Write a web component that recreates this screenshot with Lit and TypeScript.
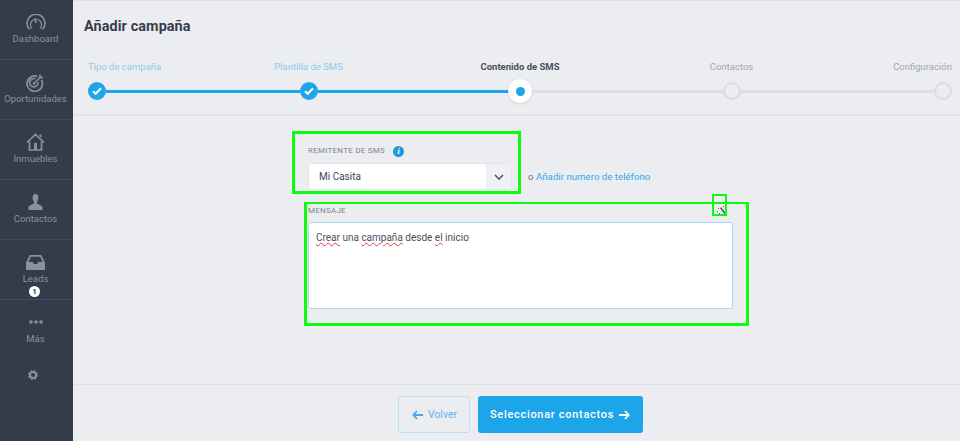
import { LitElement, html, css, svg } from "lit";
import { customElement } from "lit/decorators.js";

const check = html`<svg width="12" height="10" viewBox="0 0 12 10"><path d="M2 5.200 4.700 7.800 10 2.300" fill="none" stroke="#fff" stroke-width="2"/></svg>`;

const icons: Record<string, unknown> = {
  gauge: svg`<svg width="20" height="17" viewBox="0 0 20 17" fill="none" stroke="#8b919c"><path stroke-width="1.6" d="M3.5 15.5A9 9 0 1 1 16.5 15.5"/><path stroke-width="1.2" d="M6 14.5a5.5 5.5 0 1 1 8 0"/><path stroke-width="1.6" d="M10 9 8.8 4.5"/><path stroke-width="1" stroke-dasharray="1 1.5" d="M4.5 9a6 6 0 0 1 11 0"/></svg>`,
  target: svg`<svg width="19" height="19" viewBox="0 0 19 19" fill="none" stroke="#8b919c"><path stroke-width="1.7" d="M15.5 7a7.7 7.7 0 1 1-4-3.5"/><path stroke-width="1.6" d="M12 9a4.2 4.2 0 1 1-2.5-3.2"/><circle cx="8" cy="10.5" r="1.3" fill="#8b919c" stroke="none"/><path stroke-width="1.5" d="M8 10.5 15 3.5"/><path stroke-width="1.5" d="M14 1.5v3h3"/></svg>`,
  home: svg`<svg width="19" height="18" viewBox="0 0 19 18" fill="none" stroke="#8b919c"><path stroke-width="1.7" d="M1 9.5 9.5 1.5 18 9.5"/><path stroke-width="1.7" d="M3.5 8.5V17h12V8.5"/><path fill="#8b919c" stroke="none" d="M13.5 1.5h2v3.5l-2-2zM8 11a1.5 1.5 0 0 1 3 0v6H8z"/></svg>`,
  user: svg`<svg width="15" height="16" viewBox="0 0 15 16" fill="#8b919c"><path d="M7.5 0C5.6 0 4.6 1.4 4.6 3.5c0 1.8.7 3.5 1.5 4.4v1.6C4.5 10.500 1 11.500.5 13v3h14v-3c-.5-1.500-4-2.500-5.600-3.500V7.900c.8-.9 1.500-2.600 1.500-4.400C10.400 1.400 9.400 0 7.500 0z"/></svg>`,
  inbox: svg`<svg width="19" height="15" viewBox="0 0 19 15"><path fill="#8b919c" d="M3.800 0h11.400L19 7.500V15H0V7.500zM4.800 1.800 2.500 7h4.300l1 2h3.400l1-2h4.300l-2.300-5.200z"/></svg>`,
  dots: svg`<svg width="14" height="4" viewBox="0 0 14 4" fill="#8b919c"><circle cx="2" cy="2" r="1.800"/><circle cx="7" cy="2" r="1.800"/><circle cx="12" cy="2" r="1.800"/></svg>`,
};

@customElement("app-root")
export class AppRoot extends LitElement {
  static styles = css`
    :host { display: block; width: 960px; height: 441px; position: relative; overflow: hidden;
      font-family: Roboto, "Liberation Sans", sans-serif; background: #ebedf1; }
    .app { display: flex; height: 441px; }
    .side { width: 73px; flex: none; background: #333c4b; display: flex; flex-direction: column; }
    .nav { height: 60px; box-sizing: border-box; border-bottom: 1px solid #444c5a; display: flex; flex-direction: column;
      align-items: center; color: #8b919c; font-size: 9.500px; line-height: 12px; position: relative; padding-right: 2px; }
    .nav .ico { height: 20px; margin-top: 12px; display: flex; align-items: center; justify-content: center; }
    .nav span.t { margin-top: 1px; white-space: nowrap; }
    .nav.plain { border-bottom: none; }
    .badge { position: absolute; left: 29px; top: 46px; width: 11px; height: 11px; border-radius: 50%; background: #fff;
      color: #333c4b; font-size: 8px; font-weight: 700; line-height: 11px; text-align: center; }
    .gear { display: flex; justify-content: center; margin-top: 10px; padding-right: 7px; }
    .main { flex: 1; display: flex; flex-direction: column; min-width: 0; }
    .head { height: 116px; box-sizing: border-box; border-bottom: 2px solid #e1e3e8; border-top: 1px solid #dfe1e6; padding: 17px 8px 0 15px; flex: none; background: #ecedf1;}
    h1 { margin: 0 0 0 -4px; font-size: 14.400px; font-weight: 700; color: #343d4c; line-height: 17px; letter-spacing: .1px; }
    .steps { display: grid; grid-template-columns: 18px 1fr 18px 1fr 18px 1fr 18px 1fr 18px; grid-template-rows: 14px 18px;
      row-gap: 8px; margin: 25px 0 0 0; align-items: center; justify-items: center; }
    .lab { grid-row: 1; font-size: 9.500px; line-height: 14px; white-space: nowrap; color: #a2a6ae; }
    .lab.done { color: #8fc9ef; }
    .lab.cur { color: #474e5c; font-weight: 700; }
    .lab.s { justify-self: start; }
    .lab.e { justify-self: end; }
    .dot { grid-row: 2; width: 18px; height: 18px; border-radius: 50%; box-sizing: border-box; display: flex; align-items: center; justify-content: center; }
    .dot.done { background: #1da5e9; }
    .dot.cur { background: #fff; width: 24px; height: 24px; box-shadow: 0 1px 3px rgba(0,0,0,.12); z-index: 1; }
    .dot.cur i { width: 9px; height: 9px; border-radius: 50%; background: #1da5e9; display: block; }
    .dot.todo { border: 2px solid #d9dce1; background: #ecedf1; }
    .line { grid-row: 2; height: 3px; width: 100%; background: #dcdfe4; }
    .line.done { background: #1da5e9; }
    .content { flex: 1; padding: 29px 0 0 235px; }
    .label { font-size: 8px; letter-spacing: .25px; color: #7f848e; line-height: 12px; display: flex; align-items: center; gap: 8px; }
    .info { width: 11px; height: 11px; border-radius: 50%; background: #1d9ae0; color: #fff; font: italic 700 9px/11px "Liberation Serif", serif; text-align: center; letter-spacing: 0; }
    .row { display: flex; align-items: center; margin-top: 6px; }
    .select { width: 204px; height: 27px; box-sizing: border-box; background: #fff; border: 1px solid #e4e6ea; border-radius: 3px;
      display: flex; align-items: center; font-size: 10px; color: #3f4654; padding-left: 10px; }
    .select .v { flex: 1; }
    .select .c { width: 24px; height: 25px; background: #f0f1f4; border-left: 1px solid #e8eaed; display: flex; align-items: center; justify-content: center; }
    .or { margin-left: 16px; font-size: 9.700px; color: #6c7280; white-space: nowrap; }
    .or a { color: #34a7ea; }
    .msg { width: 425px; margin-top: 15px; }
    .msgh { display: flex; justify-content: space-between; align-items: center; height: 12px; padding-right: 6px; }
    .area { height: 87px; box-sizing: border-box; margin-top: 5px; background: #fff; border: 1px solid #a8d8f5; border-radius: 3px;
      padding: 8px 7px; font-size: 10px; line-height: 13px; color: #4a5160; }
    .sp { text-decoration: underline wavy #e23b3b 1px; text-underline-offset: 1px; }
    .foot { height: 57px; box-sizing: border-box; border-top: 1px solid #dfe1e6; flex: none; display: flex; justify-content: center;
      align-items: flex-start; gap: 8px; padding: 11px 0 0 7px; }
    .btn { height: 37px; box-sizing: border-box; border-radius: 3px; display: flex; align-items: center; justify-content: center; gap: 5px; font-size: 10.500px; }
    .back { width: 72px; border: 1px solid #bfe0f4; color: #5bb5ec; padding-left: 2px; }
    .next { width: 165px; background: #1ca5e8; color: #fff; font-weight: 500; letter-spacing: .7px; font-size: 11px; }
    .mark { position: absolute; border: 2px solid #0dfb0d; box-sizing: border-box; pointer-events: none; }
    .m1 { left: 292px; top: 131px; width: 229px; height: 63px; border-width: 3px; }
    .m2 { left: 304px; top: 202px; width: 445px; height: 124px; border-width: 2px 3px 3px 3px; }
    .m3 { left: 712px; top: 194px; width: 15px; height: 22px; }
  `;

  private nav(name: string, icon: unknown, extra?: unknown) {
    return html`<div class="nav ${name === "Más" ? "plain" : ""}"><div class="ico">${icon}</div><span class="t">${name}</span>${extra ?? ""}</div>`;
  }

  render() {
    return html`
      <div class="app">
        <aside class="side">
          ${this.nav("Dashboard", icons.gauge)}
          ${this.nav("Oportunidades", icons.target)}
          ${this.nav("Inmuebles", icons.home)}
          ${this.nav("Contactos", icons.user)}
          ${this.nav("Leads", icons.inbox, html`<span class="badge">1</span>`)}
          ${this.nav("Más", icons.dots)}
          <div class="gear">
            <svg width="10" height="10" viewBox="0 0 10 10"><circle cx="5" cy="5" r="3" fill="none" stroke="#8b919c" stroke-width="2"/><circle cx="5" cy="5" r="4.300" fill="none" stroke="#8b919c" stroke-width="1.400" stroke-dasharray="1.700 1.700"/></svg>
          </div>
        </aside>
        <main class="main">
          <header class="head">
            <h1>Añadir campaña</h1>
            <div class="steps">
              <span class="lab done s" style="grid-column:1">Tipo de campaña</span>
              <span class="lab done" style="grid-column:3">Plantilla de SMS</span>
              <span class="lab cur" style="grid-column:5">Contenido de SMS</span>
              <span class="lab" style="grid-column:7">Contactos</span>
              <span class="lab e" style="grid-column:9">Configuración</span>
              <span class="dot done">${check}</span>
              <span class="line done"></span>
              <span class="dot done">${check}</span>
              <span class="line done"></span>
              <span class="dot cur"><i></i></span>
              <span class="line"></span>
              <span class="dot todo"></span>
              <span class="line"></span>
              <span class="dot todo"></span>
            </div>
          </header>
          <section class="content">
            <div class="label">REMITENTE DE SMS <span class="info">i</span></div>
            <div class="row">
              <div class="select"><span class="v">Mi Casita</span>
                <span class="c"><svg width="10" height="6" viewBox="0 0 10 6"><path d="M1 1l4 4 4-4" fill="none" stroke="#4a5160" stroke-width="1.500"/></svg></span>
              </div>
              <span class="or">o <a>Añadir numero de teléfono</a></span>
            </div>
            <div class="msg">
              <div class="msgh"><span class="label">MENSAJE</span>
                <svg width="10" height="10" viewBox="0 0 10 10"><path d="M3 2.200 4.200 1 10 8.800 8.800 10z" fill="#5b616d"/><path d="M6 0h1v1H6zM1 2h1v1H1zM0 5h1v1H0zM2 7h1v1H2z" fill="#5b616d"/></svg>
              </div>
              <div class="area"><span class="sp">Crear</span> una <span class="sp">campaña</span> desde <span class="sp">el</span> inicio</div>
            </div>
          </section>
          <footer class="foot">
            <div class="btn back"><svg width="11" height="10" viewBox="0 0 11 10"><path d="M5 1 1.300 5 5 9M1.500 5H11" fill="none" stroke="#45ace9" stroke-width="1.800"/></svg>Volver</div>
            <div class="btn next">Seleccionar contactos<svg width="11" height="10" viewBox="0 0 11 10"><path d="M6 1l3.700 4L6 9M9.500 5H0" fill="none" stroke="#fff" stroke-width="1.800"/></svg></div>
          </footer>
        </main>
      </div>
      <div class="mark m1"></div>
      <div class="mark m2"></div>
      <div class="mark m3"></div>
    `;
  }
}
